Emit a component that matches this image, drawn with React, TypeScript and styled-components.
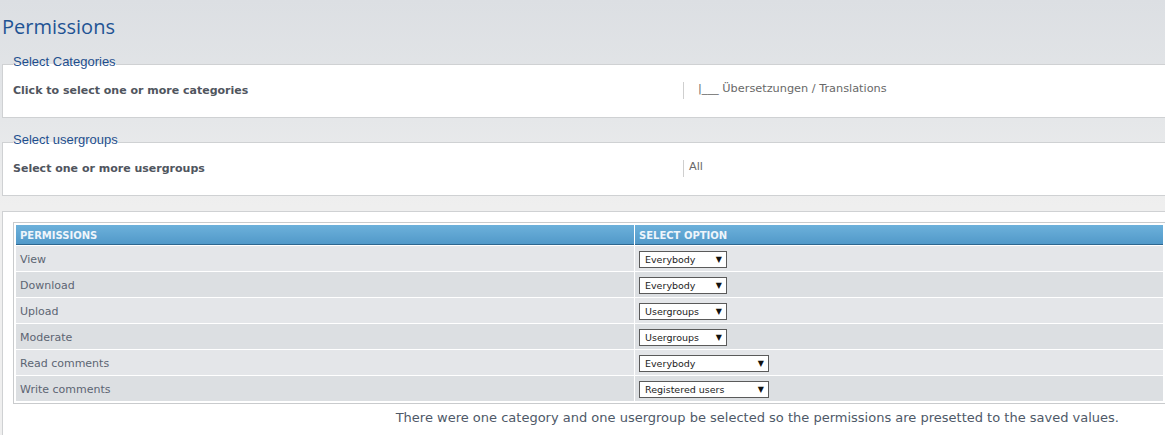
import React from "react";
import styled, { createGlobalStyle } from "styled-components";

const GlobalStyle = createGlobalStyle`
  html, body, #root {
    margin: 0;
    padding: 0;
    height: 100%;
  }
  body {
    background: linear-gradient(#dcdfe3 0, #e5e7e9 120px, #efefef 205px, #efefef 100%);
    font-family: "DejaVu Sans", Verdana, sans-serif;
  }
`;

const Page = styled.div`
  box-sizing: border-box;
  min-height: 100%;
  padding-left: 2px;
  display: flex;
  flex-direction: column;
`;

const Title = styled.h1`
  margin: 0;
  padding-top: 15px;
  font-family: "Open Sans", "Noto Sans", sans-serif;
  font-size: 20px;
  line-height: 24px;
  font-weight: 400;
  color: #1f5494;
`;

const Panel = styled.fieldset<{ $gap: number }>`
  margin: ${(p) => p.$gap}px 0 0 0;
  padding: 0 10px;
  border: 1px solid #cfd1d3;
  border-right: none;
  background: #fff;
  min-width: 0;
`;

const Legend = styled.legend`
  padding: 0 0 5px 0;
  font-family: "Liberation Sans", Arial, sans-serif;
  font-size: 13px;
  line-height: 16px;
  color: #1e4f8e;
`;

const FieldRow = styled.div`
  display: grid;
  grid-template-columns: 670px 1fr;
  align-items: start;
  height: 42px;
`;

const FieldLabel = styled.div`
  padding-top: 9px;
  font-family: "DejaVu Sans", Verdana, sans-serif;
  font-size: 11px;
  font-weight: 700;
  line-height: 14px;
  color: #50555e;
`;

const ListBox = styled.div<{ $indent: number }>`
  margin-top: 7px;
  height: 17px;
  border-left: 1px solid #cfcfcf;
  padding-left: ${(p) => p.$indent}px;
  font-family: "DejaVu Sans", Verdana, sans-serif;
  font-size: 11.3px;
  line-height: 14px;
  color: #686868;
`;

const TablePanel = styled.div`
  flex: 1;
  margin-top: 15px;
  border-top: 1px solid #cfd1d3;
  border-left: 1px solid #cfd1d3;
  background: #fff;
  padding: 10px 0 0 10px;
`;

const PermTable = styled.table`
  width: 100%;
  border: 1px solid #c9cbcd;
  border-right: none;
  border-collapse: separate;
  border-spacing: 1px;
  padding: 1px;
  background: #fff;
`;

const HeadCell = styled.th<{ $width?: number }>`
  width: ${(p) => (p.$width ? `${p.$width}px` : "auto")};
  height: 18px;
  padding: 1px 4px 0 4px;
  text-align: left;
  font-family: "DejaVu Sans", Verdana, sans-serif;
  font-size: 10px;
  font-weight: 700;
  color: #eef5fb;
  background: linear-gradient(#6db1db, #5199c9);
  border-bottom: 1px solid #2e678f;
`;

const Row = styled.tr<{ $odd: boolean }>`
  background: ${(p) => (p.$odd ? "#e4e6e9" : "#dcdfe2")};
`;

const Cell = styled.td`
  height: 24px;
  padding: 1px 4px 0 4px;
  font-family: "DejaVu Sans", Verdana, sans-serif;
  font-size: 11px;
  color: #5c6573;
`;

const SelectBox = styled.div<{ $width: number }>`
  box-sizing: border-box;
  width: ${(p) => p.$width}px;
  height: 17px;
  display: flex;
  align-items: center;
  justify-content: space-between;
  padding: 0 4px 0 5px;
  border: 1px solid #5a5a5a;
  background: #fff;
  font-family: "DejaVu Sans", Tahoma, sans-serif;
  font-size: 9.5px;
  color: #222;
  cursor: default;
`;

const Arrow = styled.span`
  font-size: 8px;
  color: #111;
`;

const Notice = styled.p`
  margin: 6px 0 0 0;
  padding-right: 46px;
  text-align: right;
  font-family: "DejaVu Sans", Verdana, sans-serif;
  font-size: 13px;
  line-height: 16px;
  color: #4e5968;
`;

const permissions = [
  { name: "View", value: "Everybody", width: 88 },
  { name: "Download", value: "Everybody", width: 88 },
  { name: "Upload", value: "Usergroups", width: 88 },
  { name: "Moderate", value: "Usergroups", width: 88 },
  { name: "Read comments", value: "Everybody", width: 130 },
  { name: "Write comments", value: "Registered users", width: 130 },
];

export default function App() {
  return (
    <Page>
      <GlobalStyle />
      <Title>Permissions</Title>

      <Panel $gap={15}>
        <Legend>Select Categories</Legend>
        <FieldRow>
          <FieldLabel>Click to select one or more categories</FieldLabel>
          <ListBox $indent={14}>|___ Übersetzungen / Translations</ListBox>
        </FieldRow>
      </Panel>

      <Panel $gap={14}>
        <Legend>Select usergroups</Legend>
        <FieldRow>
          <FieldLabel>Select one or more usergroups</FieldLabel>
          <ListBox $indent={5}>All</ListBox>
        </FieldRow>
      </Panel>

      <TablePanel>
        <PermTable>
          <thead>
            <tr>
              <HeadCell $width={610}>PERMISSIONS</HeadCell>
              <HeadCell>SELECT OPTION</HeadCell>
            </tr>
          </thead>
          <tbody>
            {permissions.map((p, i) => (
              <Row key={p.name} $odd={i % 2 === 0}>
                <Cell>{p.name}</Cell>
                <Cell>
                  <SelectBox $width={p.width}>
                    <span>{p.value}</span>
                    <Arrow>▼</Arrow>
                  </SelectBox>
                </Cell>
              </Row>
            ))}
          </tbody>
        </PermTable>
        <Notice>
          There were one category and one usergroup be selected so the
          permissions are presetted to the saved values.
        </Notice>
      </TablePanel>
    </Page>
  );
}
